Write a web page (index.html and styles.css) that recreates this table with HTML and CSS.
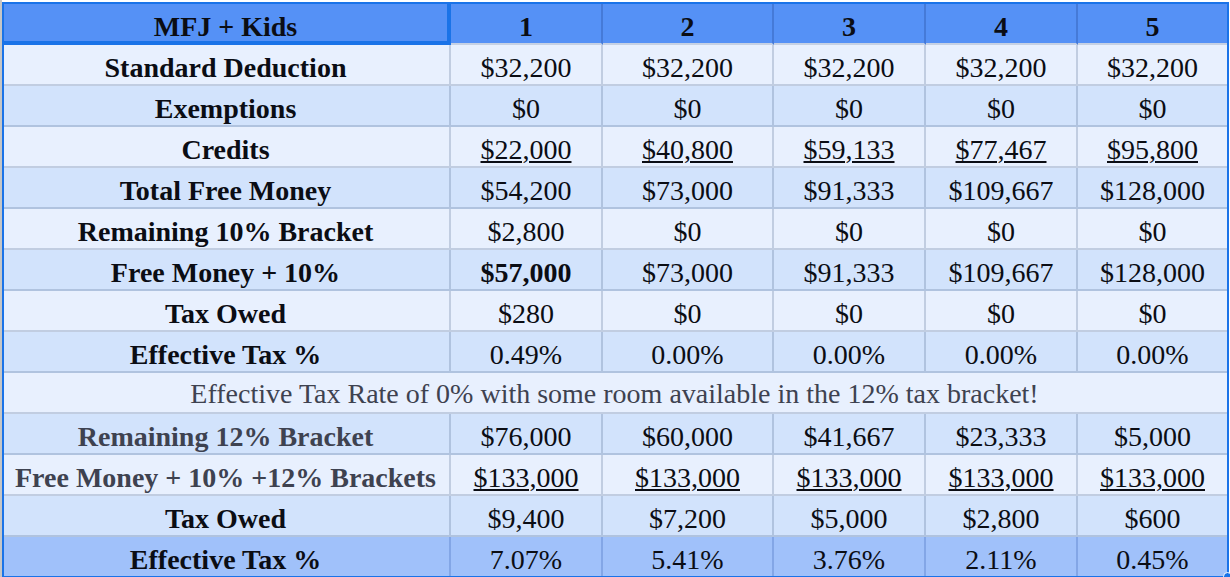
FILE: index.html
```html
<!DOCTYPE html>
<html lang="en">
<head>
<meta charset="utf-8">
<title>MFJ + Kids</title>
<link rel="stylesheet" href="styles.css">
</head>
<body>
<div class="sheet">
  <div class="gutter"></div>
  <div class="area">
    <div class="grid">
      <div class="row head">
        <div class="cell label active">MFJ + Kids</div>
        <div class="cell">1</div>
        <div class="cell">2</div>
        <div class="cell">3</div>
        <div class="cell">4</div>
        <div class="cell">5</div>
      </div>
      <div class="row light">
        <div class="cell label">Standard Deduction</div>
        <div class="cell">$32,200</div>
        <div class="cell">$32,200</div>
        <div class="cell">$32,200</div>
        <div class="cell">$32,200</div>
        <div class="cell">$32,200</div>
      </div>
      <div class="row dark">
        <div class="cell label">Exemptions</div>
        <div class="cell">$0</div>
        <div class="cell">$0</div>
        <div class="cell">$0</div>
        <div class="cell">$0</div>
        <div class="cell">$0</div>
      </div>
      <div class="row light">
        <div class="cell label">Credits</div>
        <div class="cell"><span class="ul">$22,000</span></div>
        <div class="cell"><span class="ul">$40,800</span></div>
        <div class="cell"><span class="ul">$59,133</span></div>
        <div class="cell"><span class="ul">$77,467</span></div>
        <div class="cell"><span class="ul">$95,800</span></div>
      </div>
      <div class="row dark">
        <div class="cell label">Total Free Money</div>
        <div class="cell">$54,200</div>
        <div class="cell">$73,000</div>
        <div class="cell">$91,333</div>
        <div class="cell">$109,667</div>
        <div class="cell">$128,000</div>
      </div>
      <div class="row light">
        <div class="cell label">Remaining 10% Bracket</div>
        <div class="cell">$2,800</div>
        <div class="cell">$0</div>
        <div class="cell">$0</div>
        <div class="cell">$0</div>
        <div class="cell">$0</div>
      </div>
      <div class="row dark">
        <div class="cell label">Free Money + 10%</div>
        <div class="cell strong">$57,000</div>
        <div class="cell">$73,000</div>
        <div class="cell">$91,333</div>
        <div class="cell">$109,667</div>
        <div class="cell">$128,000</div>
      </div>
      <div class="row light">
        <div class="cell label">Tax Owed</div>
        <div class="cell">$280</div>
        <div class="cell">$0</div>
        <div class="cell">$0</div>
        <div class="cell">$0</div>
        <div class="cell">$0</div>
      </div>
      <div class="row dark">
        <div class="cell label">Effective Tax %</div>
        <div class="cell">0.49%</div>
        <div class="cell">0.00%</div>
        <div class="cell">0.00%</div>
        <div class="cell">0.00%</div>
        <div class="cell">0.00%</div>
      </div>
      <div class="row light">
        <div class="cell note">Effective Tax Rate of 0% with some room available in the 12% tax bracket!</div>
      </div>
      <div class="row dark">
        <div class="cell label muted">Remaining 12% Bracket</div>
        <div class="cell">$76,000</div>
        <div class="cell">$60,000</div>
        <div class="cell">$41,667</div>
        <div class="cell">$23,333</div>
        <div class="cell">$5,000</div>
      </div>
      <div class="row light">
        <div class="cell label muted">Free Money + 10% +12% Brackets</div>
        <div class="cell"><span class="ul">$133,000</span></div>
        <div class="cell"><span class="ul">$133,000</span></div>
        <div class="cell"><span class="ul">$133,000</span></div>
        <div class="cell"><span class="ul">$133,000</span></div>
        <div class="cell"><span class="ul">$133,000</span></div>
      </div>
      <div class="row dark">
        <div class="cell label">Tax Owed</div>
        <div class="cell">$9,400</div>
        <div class="cell">$7,200</div>
        <div class="cell">$5,000</div>
        <div class="cell">$2,800</div>
        <div class="cell">$600</div>
      </div>
      <div class="row foot">
        <div class="cell label">Effective Tax %</div>
        <div class="cell">7.07%</div>
        <div class="cell">5.41%</div>
        <div class="cell">3.76%</div>
        <div class="cell">2.11%</div>
        <div class="cell">0.45%</div>
      </div>
      <div class="selection"><span class="handle"></span></div>
    </div>
  </div>
</div>
</body>
</html>
```

FILE: styles.css
```css
html, body {
  margin: 0;
  padding: 0;
  background: #ffffff;
  overflow: hidden;
}

.sheet {
  display: flex;
  font-family: "Liberation Serif", "Times New Roman", serif;
  font-size: 28px;
  color: #0b0d14;
}

.gutter {
  width: 2px;
  flex: none;
  background: #c6c6c6;
}

.area {
  padding-top: 2px;
}

.grid {
  position: relative;
  display: grid;
  grid-template-columns: 449px 152px 171px 152px 152px 151px;
  grid-template-rows: 43px repeat(13, 41px);
  width: 1227px;
}

.row {
  display: contents;
}

.cell {
  box-sizing: border-box;
  display: flex;
  align-items: flex-end;
  justify-content: center;
  line-height: 32px;
  white-space: nowrap;
  border-right: 2px solid rgba(70, 95, 135, 0.24);
  border-bottom: 2px solid rgba(70, 95, 135, 0.24);
}

.label {
  font-weight: bold;
}

.strong {
  font-weight: bold;
}

.muted {
  color: #3e4250;
}

.note {
  grid-column: 1 / -1;
  color: #3e4250;
  align-items: center;
  padding-top: 2px;
}

.head .cell {
  background: #5591f6;
  font-weight: bold;
  border-bottom-color: #c6d1e4;
  border-right-color: rgba(40, 80, 160, 0.35);
}

.head .cell.active {
  border-right-color: #1a73e8;
  border-bottom-color: #1a73e8;
  box-shadow: inset 0 0 0 2px #1a73e8;
}

.light .cell {
  background: #e8f0fe;
}

.dark .cell {
  background: #d2e3fc;
}

.foot .cell {
  background: #a0c1fa;
  border-right-color: rgba(60, 100, 180, 0.28);
}

.ul {
  text-decoration: underline;
  text-decoration-thickness: 2px;
  text-underline-offset: 2px;
}

.selection {
  position: absolute;
  top: 0;
  left: 0;
  width: 1227px;
  height: 576px;
  box-sizing: border-box;
  border: 2px solid #1a73e8;
  pointer-events: none;
}

.handle {
  position: absolute;
  right: -5px;
  bottom: -5px;
  width: 7px;
  height: 7px;
  border-radius: 50%;
  background: #1a73e8;
  border: 1px solid #ffffff;
}
```
